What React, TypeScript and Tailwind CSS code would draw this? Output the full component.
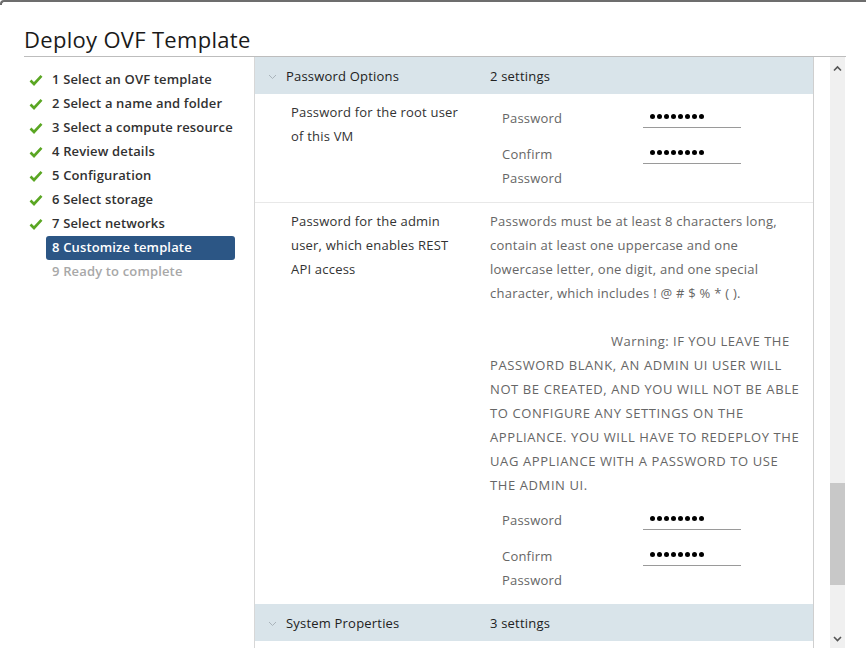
import React from "react";

const steps = [
  { n: 1, label: "Select an OVF template", state: "done" },
  { n: 2, label: "Select a name and folder", state: "done" },
  { n: 3, label: "Select a compute resource", state: "done" },
  { n: 4, label: "Review details", state: "done" },
  { n: 5, label: "Configuration", state: "done" },
  { n: 6, label: "Select storage", state: "done" },
  { n: 7, label: "Select networks", state: "done" },
  { n: 8, label: "Customize template", state: "active" },
  { n: 9, label: "Ready to complete", state: "todo" },
];

const descLines = [
  "Passwords must be at least 8 characters long,",
  "contain at least one uppercase and one",
  "lowercase letter, one digit, and one special",
  "character, which includes ! @ # $ % * ( ).",
];

const warnLines = [
  "PASSWORD BLANK, AN ADMIN UI USER WILL",
  "NOT BE CREATED, AND YOU WILL NOT BE ABLE",
  "TO CONFIGURE ANY SETTINGS ON THE",
  "APPLIANCE. YOU WILL HAVE TO REDEPLOY THE",
  "UAG APPLIANCE WITH A PASSWORD TO USE",
  "THE ADMIN UI.",
];

function Check() {
  return (
    <svg width="14" height="12" viewBox="0 0 14 12">
      <path d="M1.5 6.5 L5 10 L12.5 1.8" fill="none" stroke="#5aa623" strokeWidth="2.6" />
    </svg>
  );
}

function Chevron({ dir, color, thin }: { dir: "up" | "down"; color: string; thin?: boolean }) {
  const d = dir === "down" ? "M1 2 L4.5 5.5 L8 2" : "M1 5.5 L4.5 2 L8 5.5";
  return (
    <svg width="9" height="8" viewBox="0 0 9 8">
      <path d={d} fill="none" stroke={color} strokeWidth={thin ? 1 : 1.6} />
    </svg>
  );
}

function SectionHeader({ title, count }: { title: string; count: string }) {
  return (
    <div className="flex h-[37px] shrink-0 items-center bg-[#d9e4ea] pt-[2px] text-[13px] font-medium tracking-[0.2px] text-[#222]">
      <div className="ml-[13px] w-[18px]">
        <Chevron dir="down" color="#aab4bb" thin />
      </div>
      <div className="w-[204px]">{title}</div>
      <div>{count}</div>
    </div>
  );
}

function Dots() {
  return (
    <div className="flex h-[22px] w-[98px] items-center gap-[2px] border-b border-[#9a9a9a] pl-[7px]">
      {Array.from({ length: 8 }).map((_, i) => (
        <span key={i} className="block h-[5px] w-[5px] rounded-full bg-black" />
      ))}
    </div>
  );
}

function PasswordFields() {
  return (
    <div className="flex flex-col gap-[12px] pl-[12px] text-[13px] leading-[24px] tracking-[0.2px] text-[#666]">
      <div className="flex items-start">
        <div className="w-[141px]">Password</div>
        <Dots />
      </div>
      <div className="flex items-start">
        <div className="w-[141px]">
          Confirm
          <br />
          Password
        </div>
        <Dots />
      </div>
    </div>
  );
}

export default function App() {
  return (
    <div className="relative h-[657px] w-[866px] overflow-hidden bg-white font-['Open_Sans',sans-serif]">
      {/* modal edge */}
      <div className="h-[5px] rounded-tl-[4px] border-l-2 border-t-2 border-[#6d6d6d]" />

      <div className="ml-[24px] mr-[20px]">
        <div className="h-[51px] pt-[19px] text-[22px] leading-[30px] tracking-[0.3px] text-[#1a1a1a]">
          Deploy OVF Template
        </div>
        <div className="h-px bg-[#bdbdbd]" />

        <div className="flex h-[591px]">
          {/* Steps */}
          <div className="w-[231px] shrink-0 border-r border-[#d7d7d7] pt-[11px] text-[13px] font-semibold tracking-[0.15px]">
            {steps.map((s) => (
              <div key={s.n} className="flex h-[24px] items-center">
                <div className="flex w-[22px] justify-center pl-[2px]">
                  {s.state === "done" && <Check />}
                </div>
                <div
                  className={
                    s.state === "active"
                      ? "flex h-[24px] w-[189px] items-center rounded-[3px] bg-[#2c5685] px-[6px] text-white"
                      : s.state === "todo"
                      ? "px-[6px] text-[#a8a8a8]"
                      : "px-[6px] text-[#313131]"
                  }
                >
                  {s.n} {s.label}
                </div>
              </div>
            ))}
          </div>

          {/* Main */}
          <div className="flex w-[559px] shrink-0 flex-col border-r border-[#cfcfcf]">
            <SectionHeader title="Password Options" count="2 settings" />

            <div className="flex h-[109px] shrink-0 border-b border-[#e8e8e8]">
              <div className="w-[235px] pl-[36px] pt-[6px] text-[13px] leading-[24px] tracking-[0.2px] text-[#333]">
                Password for the root user
                <br />
                of this VM
              </div>
              <div className="pt-[12px]">
                <PasswordFields />
              </div>
            </div>

            <div className="flex h-[401px] shrink-0">
              <div className="w-[235px] pl-[36px] pt-[6px] text-[13px] leading-[24px] tracking-[0.2px] text-[#333]">
                Password for the admin
                <br />
                user, which enables REST
                <br />
                API access
              </div>
              <div className="pt-[6px]">
                <div className="text-[13px] leading-[24px] text-[#666]">
                  {descLines.map((l) => (
                    <div key={l} className="whitespace-nowrap tracking-[0.25px]">{l}</div>
                  ))}
                  <div className="h-[24px]" />
                  <div className="whitespace-nowrap pl-[121px] tracking-[0.5px]">Warning: IF YOU LEAVE THE</div>
                  {warnLines.map((l) => (
                    <div key={l} className="whitespace-nowrap tracking-[0.6px]">{l}</div>
                  ))}
                </div>
                <div className="pt-[11px]">
                  <PasswordFields />
                </div>
              </div>
            </div>

            <SectionHeader title="System Properties" count="3 settings" />
          </div>

          <div className="w-[16px] shrink-0" />

          {/* Scrollbar */}
          <div className="flex w-[15px] shrink-0 flex-col bg-[#f0f0f0]">
            <div className="flex h-[16px] items-end justify-center">
              <Chevron dir="up" color="#555" />
            </div>
            <div className="h-[410px]" />
            <div className="h-[102px] bg-[#c8c8c8]" />
            <div className="flex flex-1 items-end justify-center pb-[5px]">
              <Chevron dir="down" color="#555" />
            </div>
          </div>
        </div>
      </div>
    </div>
  );
}
